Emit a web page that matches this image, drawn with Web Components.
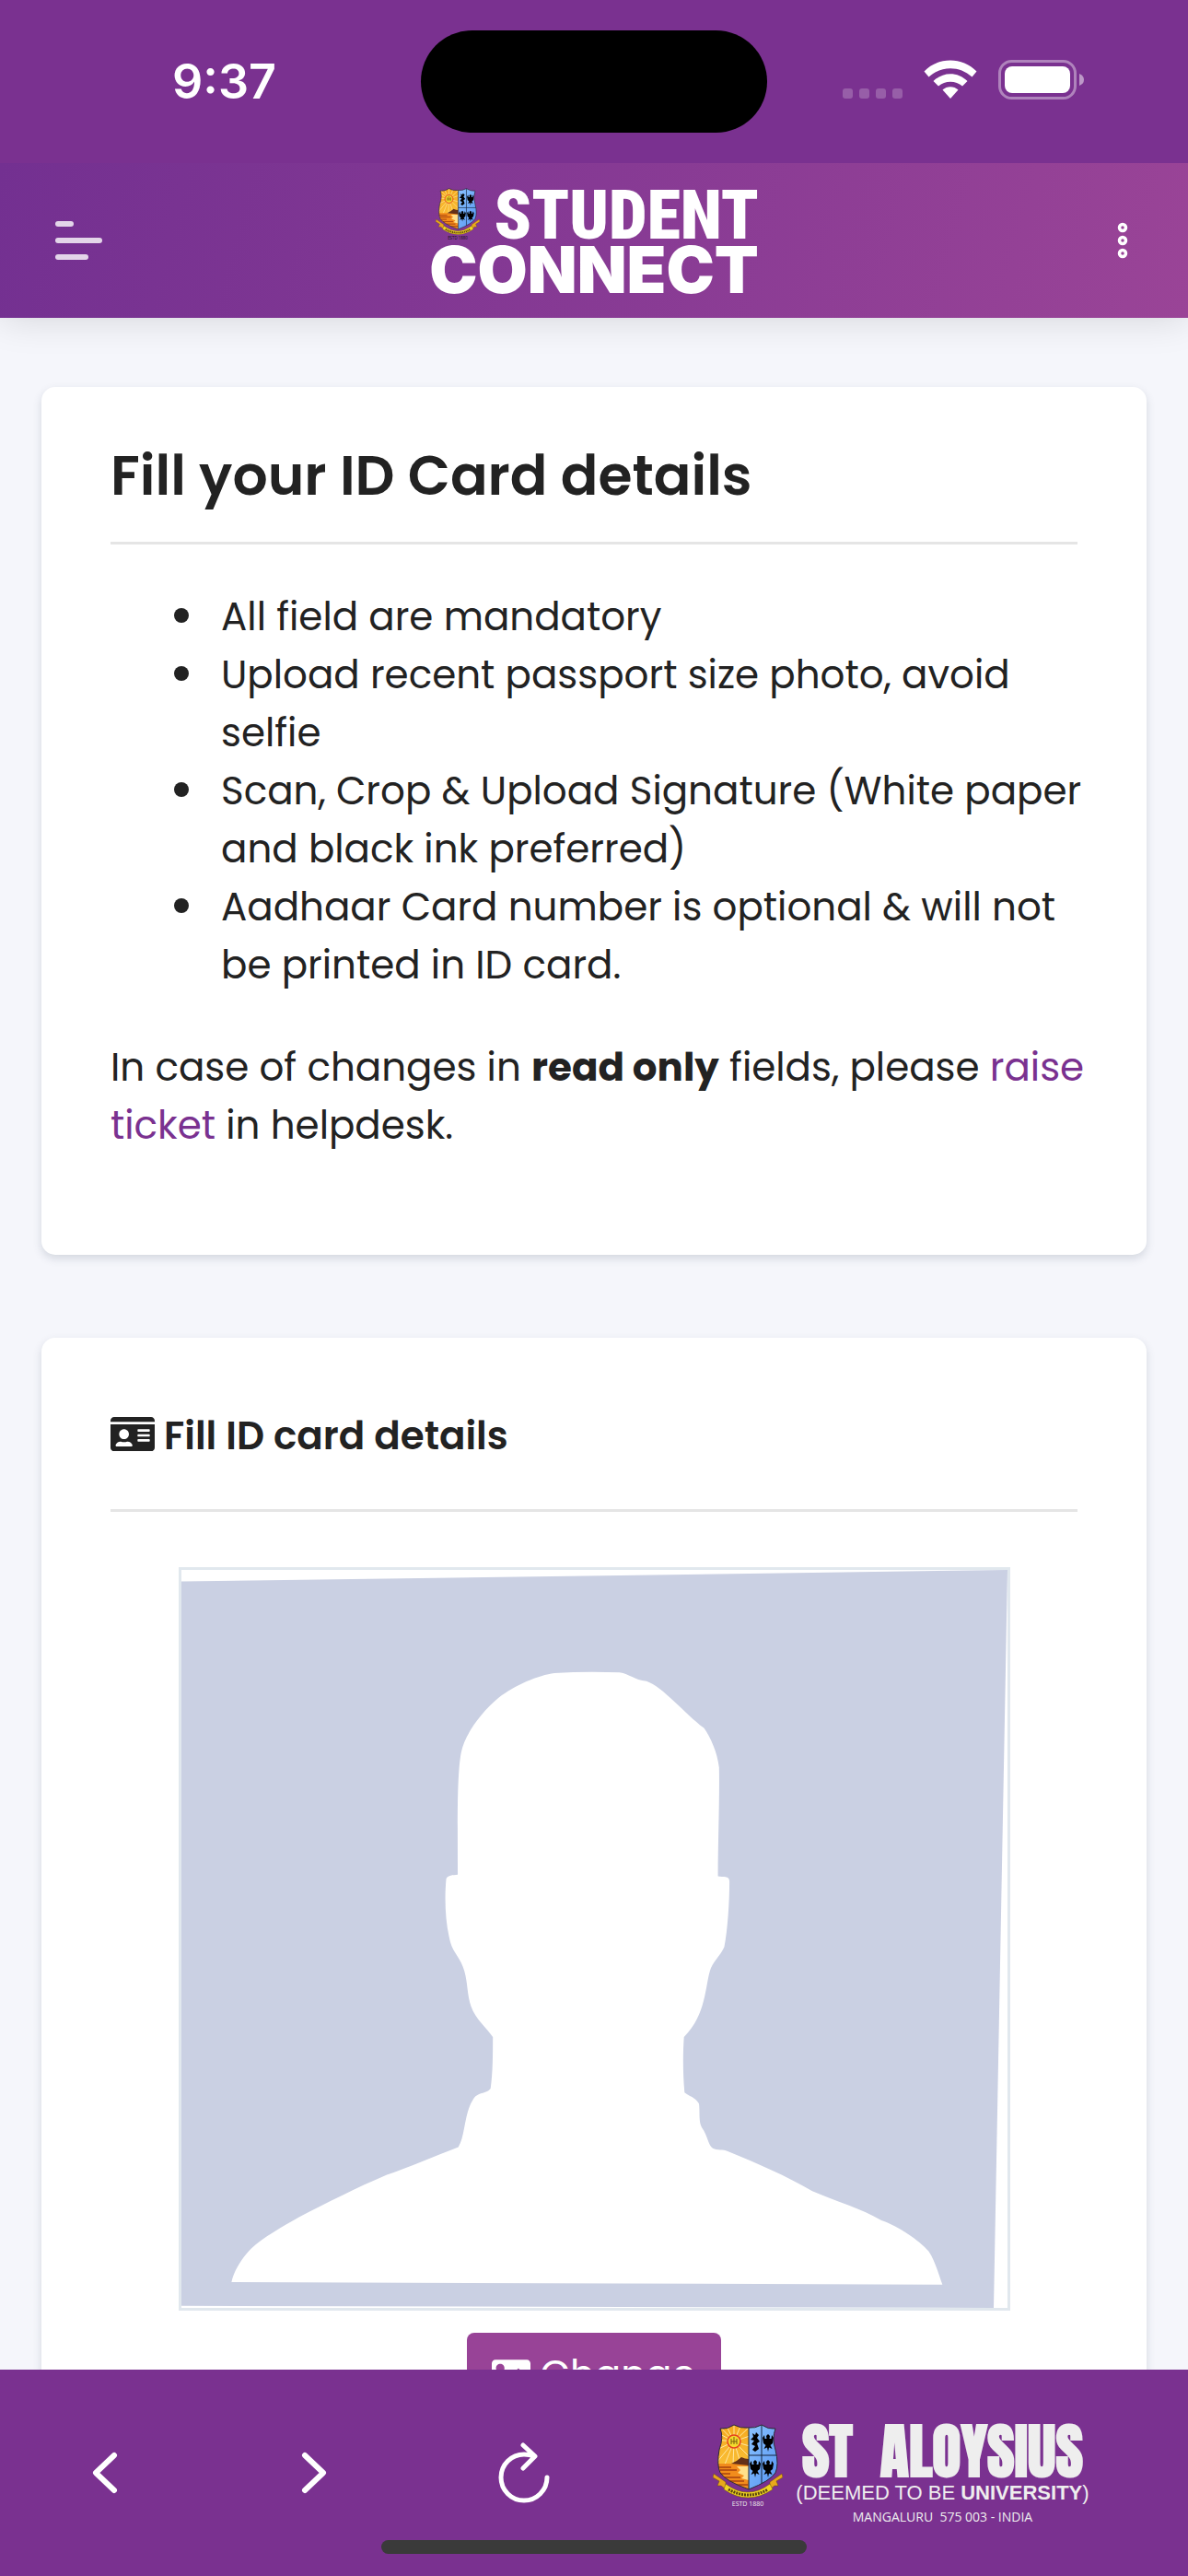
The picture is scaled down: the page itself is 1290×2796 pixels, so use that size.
<!DOCTYPE html>
<html lang="en">
<head>
<meta charset="utf-8">
<meta name="viewport" content="width=device-width, initial-scale=1">
<title>Student Connect</title>
<style>
  body {
    margin: 0;
    background: #f5f6fb;
    color: #222;
    font-family: Poppins, Inter, "Open Sans", sans-serif;
    font-size: 42px;
    line-height: 63px;
  }
</style>
</head>
<body>
<app-shell>
  <status-bar slot="top"></status-bar>
  <app-header slot="top"></app-header>

  <info-card>
    <h1 slot="title">Fill your ID Card details</h1>
    <id-instructions></id-instructions>
  </info-card>

  <info-card compact>
    <h2 slot="title"><id-icon></id-icon> Fill ID card details</h2>
    <photo-picker></photo-picker>
  </info-card>

  <bottom-nav slot="bottom"></bottom-nav>
</app-shell>

<script>
class AppShell extends HTMLElement {
  constructor() {
    super();
    this.attachShadow({ mode: 'open' });
    this.shadowRoot.innerHTML = `
      <style>
        :host {
          display: flex;
          flex-direction: column;
          height: 100vh;
        }
        .top {
          position: relative;
          z-index: 1;
        }
        main {
          flex: 1;
          min-height: 0;
          overflow-y: auto;
          scrollbar-width: none;
          display: flex;
          flex-direction: column;
          gap: 90px;
          padding: 75px 45px;
        }
      </style>
      <div class="top"><slot name="top"></slot></div>
      <main><slot></slot></main>
      <slot name="bottom"></slot>
    `;
  }
}

class StatusBar extends HTMLElement {
  constructor() {
    super();
    this.attachShadow({ mode: 'open' });
    this.shadowRoot.innerHTML = `
      <style>
        :host {
          position: relative;
          z-index: 1;
          display: grid;
          grid-template-columns: 1fr 376px 1fr;
          align-items: center;
          height: 177px;
          background: #7a3190;
          color: #fff;
        }
        .time {
          padding-left: 30px;
          text-align: center;
          font-family: Inter, sans-serif;
          font-size: 52px;
          font-weight: 600;
        }
        .island {
          height: 111px;
          border-radius: 56px;
          background: #000;
        }
        .icons {
          display: flex;
          justify-content: center;
          align-items: flex-end;
          gap: 23px;
          padding: 0 30px 4px 0;
        }
        svg {
          display: block;
        }
      </style>
      <div class="time">9:37</div>
      <div class="island"></div>
      <div class="icons">
        <svg width="65" height="43" viewBox="0 0 65 43" fill="#fff" fill-opacity=".22">
          <rect x="0" y="31" width="11" height="11" rx="3"/>
          <rect x="18" y="31" width="11" height="11" rx="3"/>
          <rect x="36" y="31" width="11" height="11" rx="3"/>
          <rect x="54" y="31" width="11" height="11" rx="3"/>
        </svg>
        <svg width="58" height="43" viewBox="0 0 58 43" fill="#fff">
          <path d="M0.5 12.500C16 -3.500 42 -3.500 57.500 12.500L52.500 18.500C39 6 19 6 5.500 18.500Z"/>
          <path d="M10.500 23C21 12.500 37 12.500 47.500 23L42 28.500C35 22 23 22 16 28.500Z"/>
          <path d="M20.500 32.500C25 28 33 28 37.500 32.500L29 42Z"/>
        </svg>
        <svg width="94" height="43" viewBox="0 0 94 43">
          <rect x="1.500" y="1.500" width="82" height="40" rx="13" fill="none" stroke="#fff" stroke-opacity=".4" stroke-width="3"/>
          <rect x="7" y="7" width="71" height="29" rx="8" fill="#fff"/>
          <path d="M88 15Q93 17 93 21.500T88 28Z" fill="#fff" fill-opacity=".5"/>
        </svg>
      </div>
    `;
  }
}

// College shield, shared by the header and the bottom bar
class CollegeCrest extends HTMLElement {
  constructor() {
    super();
    this.attachShadow({ mode: 'open' });
    this.shadowRoot.innerHTML = `
      <style>
        :host {
          display: block;
          width: 76px;
        }
        svg {
          display: block;
          width: 100%;
        }
        text {
          font: 7px "Open Sans", sans-serif;
          fill: var(--crest-text, #eee);
        }
      </style>
      <svg viewBox="0 0 76 90">
        <defs>
          <clipPath id="shield"><path d="M8 5Q16 6 23 1Q30 5 38 4Q46 5 53 1Q60 6 68 5Q64 16 68 28Q72 44 68 53Q62 62 39 71Q14 62 8 53Q4 44 7 28Q12 14 8 5Z"/></clipPath>
          <linearGradient id="sky" x1="0" y1="0" x2="0" y2="1">
            <stop offset="0" stop-color="#f5a81d"/>
            <stop offset="1" stop-color="#fccb45"/>
          </linearGradient>
          <linearGradient id="blue" x1="0" y1="0" x2="1" y2="1">
            <stop offset="0" stop-color="#8cc4ff"/>
            <stop offset="1" stop-color="#4f8ff0"/>
          </linearGradient>
          <g id="eagle">
            <path d="M0 -9L2 -7L1.500 -4L3.500 -4L4 -8L6 -5L5 1L2.500 3L4.500 7L1 5.500L0 10L-1 5.500L-4.500 7L-2.500 3L-5 1L-6 -5L-4 -8L-3.500 -4L-1.500 -4L-2 -7Z"/>
          </g>
        </defs>
        <g clip-path="url(#shield)">
          <rect width="39" height="72" fill="url(#sky)"/>
          <path d="M23 19L5 0M23 19L14 0M23 19L23 0M23 19L31 0M23 19L40 3M23 19L40 13M23 19L40 24M23 19L40 36M23 19L30 42M23 19L22 44M23 19L13 44M23 19L4 42M23 19L2 29M23 19L2 17M23 19L2 8" stroke="#ffe7a0" stroke-width="1"/>
          <rect y="43" width="39" height="30" fill="#f28c1c"/>
          <path d="M4 47H20M8 50H26M6 54H19M10 58H30M16 62H34M24 66H38" stroke="#a8420f" stroke-width="1.500"/>
          <path d="M39 46H26L30 50L27 53L34 56L31 59L39 61Z" fill="#ffe08a"/>
          <path d="M20 43Q27 40 31 36Q35 38 39 38V45Z" fill="#633018"/>
          <circle cx="23" cy="19" r="7" fill="#f3da2d" stroke="#e5401f" stroke-width="1.500"/>
          <path d="M20 16V22M23 14V22M26 16V22M20 19H26" stroke="#775c10" stroke-width="1"/>
          <rect x="39" width="37" height="72" fill="url(#blue)"/>
          <path d="M39 0V72M53 0V66M39 34H70" stroke="#14233c" stroke-width="1"/>
          <path d="M43 10L46 12L47 9L50 12L48 15L51 19L48 21L50 27L46 30L43 28L46 24L42 22L45 18L41 17L44 14Z"/>
          <use href="#eagle" x="60" y="20"/>
          <use href="#eagle" x="46" y="48"/>
          <use href="#eagle" x="60" y="48"/>
        </g>
        <path d="M8 5Q16 6 23 1Q30 5 38 4Q46 5 53 1Q60 6 68 5Q64 16 68 28Q72 44 68 53Q62 62 39 71Q14 62 8 53Q4 44 7 28Q12 14 8 5Z" fill="none" stroke="#2b2b35"/>
        <path d="M1 54L14 63V71L9 67L5 67L7 62L0 58Z" fill="#e8a91b" stroke="#6b4a0c" stroke-width=".5"/>
        <path d="M75 54L62 63V71L67 67L71 67L69 62L76 58Z" fill="#e8a91b" stroke="#6b4a0c" stroke-width=".5"/>
        <path d="M14 65Q38 83 62 65L65 71Q38 89 12 71Z" fill="#f1d621" stroke="#6b4a0c" stroke-width=".5"/>
        <path d="M17 71Q38 83 60 71" fill="none" stroke="#5a4310" stroke-width="3" stroke-dasharray="2 1"/>
        <text x="38" y="89" text-anchor="middle">ESTD 1880</text>
      </svg>
    `;
  }
}

class AppHeader extends HTMLElement {
  constructor() {
    super();
    this.attachShadow({ mode: 'open' });
    this.shadowRoot.innerHTML = `
      <style>
        :host {
          display: grid;
          grid-template-columns: 1fr auto 1fr;
          align-items: center;
          height: 168px;
          padding: 0 60px;
          background: linear-gradient(105deg, #733091, #9a4497);
          box-shadow: 0 0 40px rgba(0, 0, 0, 0.14);
          color: #fff;
        }
        button {
          padding: 0;
          border: 0;
          background: none;
          color: inherit;
          cursor: pointer;
        }
        .more {
          justify-self: end;
        }
        .menu {
          justify-self: start;
        }
        svg {
          display: block;
        }
        .logo {
          display: flex;
          flex-direction: column;
          align-items: flex-end;
          padding-top: 4px;
          font-family: "Roboto Condensed", "Open Sans Condensed", Roboto, sans-serif;
          font-weight: 900;
        }
        .row {
          display: flex;
          align-items: flex-start;
          gap: 16px;
        }
        college-crest {
          width: 48px;
          --crest-text: #111;
        }
        .student {
          font-size: 74px;
          line-height: 60px;
        }
        .connect {
          font-family: Inter, sans-serif;
          font-size: 70px;
          line-height: 58px;
        }
      </style>
      <button class="menu" aria-label="Menu">
        <svg width="51" height="42" viewBox="0 0 51 42" fill="#fff" fill-opacity=".8">
          <rect width="20" height="6" rx="3"/>
          <rect y="18" width="51" height="6" rx="3"/>
          <rect y="36" width="36" height="6" rx="3"/>
        </svg>
      </button>
      <div class="logo">
        <div class="row"><college-crest></college-crest><span class="student">STUDENT</span></div>
        <span class="connect">CONNECT</span>
      </div>
      <button class="more" aria-label="More">
        <svg width="22" height="40" viewBox="0 0 22 40" fill="none" stroke="#fff" stroke-width="3.500">
          <circle cx="11" cy="6" r="3.500"/>
          <circle cx="11" cy="20" r="3.500"/>
          <circle cx="11" cy="34" r="3.500"/>
        </svg>
      </button>
    `;
  }
}

class InfoCard extends HTMLElement {
  constructor() {
    super();
    this.attachShadow({ mode: 'open' });
    this.shadowRoot.innerHTML = `
      <style>
        :host {
          display: block;
          flex: none;
          padding: 60px 75px 109px;
          border-radius: 15px;
          background: #fff;
          box-shadow: 0 4px 10px rgba(60, 80, 100, 0.18);
        }
        ::slotted(h1) {
          margin: 0;
          font-size: 60px;
          font-weight: 600;
          line-height: 72px;
        }
        ::slotted(h2) {
          margin: 0;
          padding: 15px 0 12px;
          font-size: 42px;
          font-weight: 600;
          line-height: 63px;
        }
        hr {
          margin: 36px 0 47px;
          border: 0;
          border-top: 3px solid #e5e5e5;
        }
        :host([compact]) hr {
          margin-bottom: 60px;
        }
      </style>
      <slot name="title"></slot>
      <hr>
      <slot></slot>
    `;
  }
}

class IdInstructions extends HTMLElement {
  constructor() {
    super();
    this.attachShadow({ mode: 'open' });
    this.shadowRoot.innerHTML = `
      <style>
        :host {
          display: block;
          margin-right: -20px;
        }
        ul {
          margin: 0 0 48px;
          padding-left: 69px;
          list-style: none;
        }
        li {
          display: flex;
          gap: 35px;
        }
        li::before {
          content: "";
          flex: none;
          width: 16px;
          height: 16px;
          margin-top: 22px;
          border-radius: 50%;
          background: currentColor;
        }
        p {
          margin: 0;
        }
        b {
          font-weight: 700;
        }
        a {
          color: #7a3190;
          text-decoration: none;
        }
      </style>
      <ul>
        <li>All field are mandatory</li>
        <li>Upload recent passport size photo, avoid selfie</li>
        <li>Scan, Crop &amp; Upload Signature (White paper and black ink preferred)</li>
        <li>Aadhaar Card number is optional &amp; will not be printed in ID card.</li>
      </ul>
      <p>In case of changes in <b>read only</b> fields, please <a href="#helpdesk">raise ticket</a> in helpdesk.</p>
    `;
  }
}

class IdIcon extends HTMLElement {
  constructor() {
    super();
    this.attachShadow({ mode: 'open' });
    this.shadowRoot.innerHTML = `
      <style>
        :host {
          display: inline-block;
          width: 48px;
          vertical-align: -2px;
        }
        svg {
          display: block;
          width: 100%;
        }
      </style>
      <svg viewBox="0 0 576 448" fill="currentColor">
        <path fill-rule="evenodd" d="M528 0H48C21 0 0 21 0 48v16h576V48c0-27-21-48-48-48zM0 400c0 27 21 48 48 48h480c27 0 48-21 48-48V96H0v304zM352 168c0-4 4-8 8-8h144c4 0 8 4 8 8v16c0 4-4 8-8 8H360c-4 0-8-4-8-8v-16zm0 64c0-4 4-8 8-8h144c4 0 8 4 8 8v16c0 4-4 8-8 8H360c-4 0-8-4-8-8v-16zm0 64c0-4 4-8 8-8h144c4 0 8 4 8 8v16c0 4-4 8-8 8H360c-4 0-8-4-8-8v-16zM176 160c35 0 64 29 64 64s-29 64-64 64-64-29-64-64 29-64 64-64zM67 364c9-26 33-44 61-44h8c12 5 26 8 40 8s28-3 40-8h8c28 0 53 18 61 44 3 10-5 20-16 20H83c-11 0-19-10-16-20z"/>
      </svg>
    `;
  }
}

class PhotoPicker extends HTMLElement {
  constructor() {
    super();
    this.attachShadow({ mode: 'open' });
    this.shadowRoot.innerHTML = `
      <style>
        :host {
          display: flex;
          flex-direction: column;
          align-items: center;
          gap: 24px;
        }
        .photo {
          display: block;
          box-sizing: border-box;
          width: 86%;
          aspect-ratio: 903 / 807;
          border: 3px solid #e1e8ee;
        }
        button {
          display: flex;
          align-items: center;
          gap: 10px;
          height: 90px;
          padding: 0 27px;
          border: 0;
          border-radius: 8px;
          background: #984397;
          color: #fff;
          font: inherit;
          cursor: pointer;
        }
      </style>
      <svg class="photo" viewBox="59 44 1435 1460" preserveAspectRatio="none" role="img" aria-label="Photo">
        <rect x="59" y="44" width="1435" height="1460" fill="#fff"/>
        <path d="M59 67L1494 44L1470 1504L59 1500Z" fill="#cad0e3"/>
        <path fill="#fff" d="M146 1453C150 1430 166 1403 180 1387C200 1365 235 1343 264 1324C310 1297 365 1265 415 1241C455 1226 500 1203 540 1186C552 1165 550 1120 565 1093C573 1075 588 1082 596 1070C600 1040 600 1000 600 968C590 951 570 933 562 907C554 880 557 855 548 829C541 808 528 798 524 770C517 735 516 690 519 655C522 648 530 648 539 647C539 560 537 450 545 405C551 370 580 325 610 297C637 272 680 252 707 248Q766 244 820 247C838 250 845 262 867 264C895 275 935 330 967 357C978 375 990 405 993 435C994 500 991 580 991 650C1000 652 1011 648 1011 660C1011 700 1008 755 1002 790C995 808 981 820 977 838C969 868 970 925 932 968C930 1000 930 1040 933 1078C940 1085 952 1087 958 1100C960 1115 957 1135 963 1147C974 1165 973 1180 982 1188C990 1193 1000 1189 1008 1194C1060 1218 1110 1243 1155 1273C1200 1295 1240 1307 1275 1331C1305 1343 1340 1370 1357 1392C1368 1410 1375 1440 1381 1458Z"/>
      </svg>
      <button type="button">
        <svg width="42" height="42" viewBox="0 0 512 512" fill="currentColor">
          <path d="M464 448H48c-27 0-48-21-48-48V112c0-27 21-48 48-48h416c27 0 48 21 48 48v288c0 27-21 48-48 48zM112 120c-31 0-56 25-56 56s25 56 56 56 56-25 56-56-25-56-56-56zM64 384h384V272l-87-87c-5-5-12-5-17 0L208 320l-55-55c-5-5-12-5-17 0L64 336v48z"/>
        </svg>
        Change
      </button>
    `;
  }
}

class BottomNav extends HTMLElement {
  constructor() {
    super();
    this.attachShadow({ mode: 'open' });
    this.shadowRoot.innerHTML = `
      <style>
        :host {
          position: relative;
          z-index: 1;
          display: grid;
          grid-template-columns: 3fr 3fr 3fr 8fr;
          align-items: center;
          justify-items: center;
          height: 224px;
          background: #7a3190;
          color: #eee;
        }
        button {
          padding: 0;
          border: 0;
          background: none;
          cursor: pointer;
        }
        svg {
          display: block;
          fill: none;
          stroke: #fff;
          stroke-linecap: round;
          stroke-linejoin: round;
        }
        .brand {
          display: flex;
          align-items: flex-start;
          gap: 14px;
          padding: 6px 16px 0 0;
        }
        .brand-text {
          display: flex;
          flex-direction: column;
          align-items: center;
          white-space: nowrap;
        }
        .name {
          font-family: Impact, Anton, "Roboto Condensed", sans-serif;
          font-size: 64px;
          font-weight: 900;
          line-height: 60px;
        }
        .kind {
          font-family: "Liberation Sans", sans-serif;
          font-size: 22px;
          line-height: 30px;
        }
        .place {
          font-family: "Open Sans", sans-serif;
          font-size: 14px;
          line-height: 22px;
        }
        .home {
          position: absolute;
          bottom: 24px;
          left: 50%;
          width: 462px;
          height: 15px;
          margin-left: -231px;
          border-radius: 8px;
          background: #3a3a3a;
        }
      </style>
      <button aria-label="Back">
        <svg width="28" height="46" viewBox="0 0 28 46" stroke-width="6"><path d="M24 4L4 23L24 42"/></svg>
      </button>
      <button aria-label="Forward">
        <svg width="28" height="46" viewBox="0 0 28 46" stroke-width="6"><path d="M4 4L24 23L4 42"/></svg>
      </button>
      <button aria-label="Reload">
        <svg width="56" height="66" viewBox="0 0 56 66" stroke-width="5"><path d="M27 3L40 15L27 28M39 15Q34 13 28 13A25 25 0 1 0 53 38"/></svg>
      </button>
      <div class="brand">
        <college-crest></college-crest>
        <div class="brand-text">
          <span class="name">ST&nbsp; ALOYSIUS</span>
          <span class="kind">(DEEMED TO BE <b>UNIVERSITY</b>)</span>
          <span class="place">MANGALURU&nbsp; 575 003 - INDIA</span>
        </div>
      </div>
      <div class="home"></div>
    `;
  }
}

customElements.define('college-crest', CollegeCrest);
customElements.define('id-icon', IdIcon);
customElements.define('app-shell', AppShell);
customElements.define('status-bar', StatusBar);
customElements.define('app-header', AppHeader);
customElements.define('info-card', InfoCard);
customElements.define('id-instructions', IdInstructions);
customElements.define('photo-picker', PhotoPicker);
customElements.define('bottom-nav', BottomNav);
</script>
</body>
</html>
